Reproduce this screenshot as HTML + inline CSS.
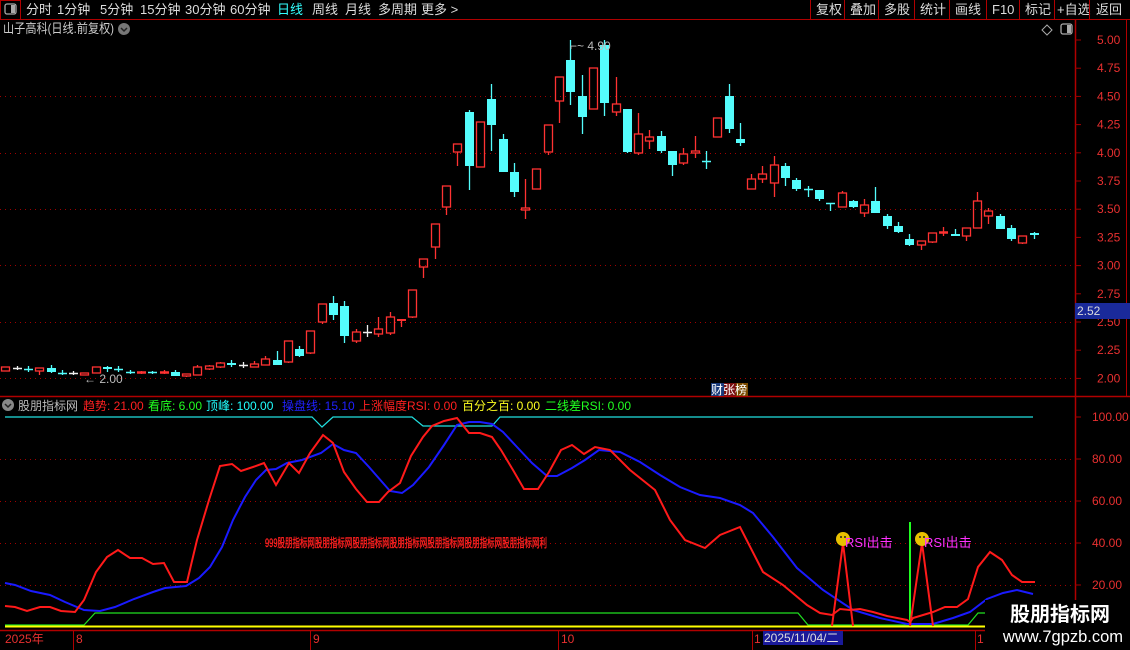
<!DOCTYPE html>
<html><head><meta charset="utf-8"><style>
body{margin:0;background:#000;width:1130px;height:650px;overflow:hidden;font-family:"Liberation Sans","Noto Sans CJK SC",sans-serif;}
svg{position:absolute;left:0;top:0}
text{font-family:"Liberation Sans","Noto Sans CJK SC",sans-serif}
</style></head><body>
<svg id="s" width="1130" height="650" viewBox="0 0 1130 650">
<rect width="1130" height="650" fill="#000"/>
<line x1="0" y1="19.5" x2="1130" y2="19.5" stroke="#b00000"/>
<rect x="0.5" y="0.5" width="20" height="19" fill="none" stroke="#b00000"/>
<rect x="5" y="4" width="11" height="10" rx="2" fill="none" stroke="#aaa" stroke-width="1.3"/>
<rect x="11" y="5" width="4" height="8" fill="#aaa"/>
<g font-size="13" fill="#ddd">
<text x="26" y="14">分时</text><text x="57" y="14">1分钟</text><text x="100" y="14">5分钟</text><text x="140" y="14">15分钟</text><text x="185" y="14">30分钟</text><text x="230" y="14">60分钟</text>
<text x="277" y="14" fill="#3ff">日线</text><text x="312" y="14">周线</text><text x="345" y="14">月线</text><text x="378" y="14">多周期</text><text x="421" y="14">更多 &gt;</text>
<text x="816" y="14">复权</text><text x="850" y="14">叠加</text><text x="884" y="14">多股</text><text x="920" y="14">统计</text><text x="955" y="14">画线</text><text x="992" y="14">F10</text><text x="1025" y="14">标记</text><text x="1057" y="14">+自选</text><text x="1096" y="14">返回</text>
</g>
<g stroke="#b00000"><line x1="810.5" y1="0" x2="810.5" y2="19"/><line x1="844.5" y1="0" x2="844.5" y2="19"/><line x1="878.5" y1="0" x2="878.5" y2="19"/><line x1="914.5" y1="0" x2="914.5" y2="19"/><line x1="949.5" y1="0" x2="949.5" y2="19"/><line x1="986.5" y1="0" x2="986.5" y2="19"/><line x1="1019.5" y1="0" x2="1019.5" y2="19"/><line x1="1054.5" y1="0" x2="1054.5" y2="19"/><line x1="1089.5" y1="0" x2="1089.5" y2="19"/></g>
<text x="3" y="33" font-size="13" fill="#ccc" textLength="111" lengthAdjust="spacingAndGlyphs">山子高科(日线.前复权)</text>
<circle cx="124" cy="29" r="6" fill="#777"/><path d="M121 28l3 3 3-3" stroke="#222" stroke-width="1.5" fill="none"/>
<path d="M1047 25l5 5-5 5-5-5z" fill="none" stroke="#aaa"/>
<rect x="1061" y="24" width="11" height="10" rx="2" fill="none" stroke="#aaa" stroke-width="1.3"/><rect x="1067" y="25" width="4" height="8" fill="#aaa"/>
<line x1="1075.5" y1="20" x2="1075.5" y2="650" stroke="#b00000" stroke-width="1.5"/>
<line x1="0" y1="396.5" x2="1130" y2="396.5" stroke="#b00000" stroke-width="1.5"/>
<line x1="1126.5" y1="20" x2="1126.5" y2="396" stroke="#b00000"/>
<g id="grid" stroke="#a00000" stroke-dasharray="1 4"></g>
<g id="pax" font-size="12" fill="#e83030"></g>
<rect x="1075" y="303" width="55" height="16" fill="#1a2a9a"/>
<text x="1077" y="315" font-size="12" fill="#ddd">2.52</text>
<g id="cd"></g>
<text x="84" y="383" font-size="12" fill="#bbb">← 2.00</text>
<text x="570" y="50" font-size="12" fill="#bbb">⌐~ 4.90</text>
<rect x="711" y="383" width="13" height="13" fill="#1a3a7a"/><rect x="724" y="383" width="12" height="13" fill="#7a1010"/><rect x="736" y="383" width="12" height="13" fill="#7a4a00"/>
<text x="711" y="394" font-size="12" fill="#fff">财张榜</text>
<circle cx="8" cy="405" r="6" fill="#888"/><path d="M5 404l3 3 3-3" stroke="#222" stroke-width="1.5" fill="none"/>
<g font-size="12"><text x="18" y="410" fill="#bbb">股朋指标网</text><text x="83" y="410" fill="#ff2020">趋势: 21.00</text><text x="148" y="410" fill="#20ff20">看底: 6.00</text><text x="206" y="410" fill="#20ffff">顶峰: 100.00</text><text x="282" y="410" fill="#2020ff">操盘线: 15.10</text><text x="359" y="410" fill="#ff2020">上涨幅度RSI: 0.00</text><text x="462" y="410" fill="#ffff20">百分之百: 0.00</text><text x="545" y="410" fill="#20ff20">二线差RSI: 0.00</text></g>
<g id="lax" font-size="12" fill="#e83030"></g>
<text x="265" y="547" font-size="12" fill="#ff2020" stroke="#ff2020" stroke-width="0.4" textLength="282" lengthAdjust="spacingAndGlyphs">999股朋指标网股朋指标网股朋指标网股朋指标网股朋指标网股朋指标网股朋指标网利</text>
<polyline fill="none" stroke="#20e0e0" stroke-width="1.2" points="5,417 312,417 322,427 333,417 412,417 423,426 492,426 500,417 1033,417"/>
<polyline fill="none" stroke="#20e020" stroke-width="1.2" points="5,625 84,625 95,613 798,613 808,625 968,625 978,613 985,613"/>
<line x1="5" y1="626.5" x2="985" y2="626.5" stroke="#ffff00" stroke-width="2"/>
<line x1="910" y1="522" x2="910" y2="626" stroke="#20ff20" stroke-width="2"/>
<polyline fill="none" stroke="#1a1aff" stroke-width="2" points="5,583 15,585 31,591 50,595 65,602 84,610 100,611 115,607 134,599 153,592 165,588 186,586 199,578 210,567 222,547 233,520 245,497 256,480 266,470 276,469 287,463 302,460 321,453 333,444 344,450 356,453 369,467 383,483 390,491 402,493 413,485 429,467 444,445 457,425 469,422 480,422 492,424 503,432 517,447 532,463 547,476 557,476 572,468 585,460 599,450 620,452 640,462 660,475 680,487 700,495 720,498 740,505 753,513 773,537 797,568 823,590 853,610 880,618 907,624 933,624 953,618 970,612 987,599 1003,593 1017,590 1033,594"/>
<polyline fill="none" stroke="#ff1a1a" stroke-width="2" points="5,606 15,607 27,611 40,607 50,607 61,611 75,612 84,600 96,572 107,557 118,550 130,558 142,558 153,564 164,563 174,582 187,582 197,540 209,500 220,466 232,464 241,471 253,467 264,463 276,485 289,463 299,473 310,453 323,435 333,443 344,472 356,489 367,502 379,502 388,492 400,483 411,456 423,437 432,426 444,421 457,418 469,433 480,433 492,437 501,450 513,470 524,489 538,489 549,472 561,450 572,445 584,454 595,447 610,450 630,470 655,490 670,520 685,540 705,548 720,535 740,527 763,572 783,585 807,605 820,613 832,615 840,609 850,610 860,609 873,612 887,616 907,620 910,622 913,618 933,612 945,607 957,607 968,599 978,567 990,552 1002,560 1012,575 1022,582 1035,582"/>
<polyline fill="none" stroke="#ff1a1a" stroke-width="2" points="832,626 843,543 853,626"/>
<polyline fill="none" stroke="#ff1a1a" stroke-width="2" points="910,626 922,543 933,626"/>
<circle cx="843" cy="539" r="7" fill="#e8c000"/><circle cx="922" cy="539" r="7" fill="#e8c000"/>
<g fill="#222"><circle cx="841" cy="537" r="1"/><circle cx="845" cy="537" r="1"/><circle cx="920" cy="537" r="1"/><circle cx="924" cy="537" r="1"/></g>
<text x="845" y="547" font-size="13" fill="#ff30ff">RSI出击</text><text x="924" y="547" font-size="13" fill="#ff30ff">RSI出击</text>
<line x1="0" y1="630.5" x2="1075" y2="630.5" stroke="#b00000" stroke-width="1.5"/>
<g stroke="#b00000"><line x1="73.5" y1="630" x2="73.5" y2="650"/><line x1="310.5" y1="630" x2="310.5" y2="650"/><line x1="558.5" y1="630" x2="558.5" y2="650"/><line x1="752.5" y1="630" x2="752.5" y2="650"/><line x1="975.5" y1="630" x2="975.5" y2="650"/></g>
<g font-size="12" fill="#e83030"><text x="5" y="643">2025年</text><text x="76" y="643">8</text><text x="313" y="643">9</text><text x="561" y="643">10</text><text x="754" y="643">1</text><text x="977" y="643">1</text></g>
<rect x="763" y="631" width="80" height="14" fill="#1a1a9a"/><text x="764" y="642" font-size="12" fill="#ddd">2025/11/04/二</text>
<rect x="985" y="600" width="145" height="50" fill="#000"/>
<text x="1060" y="621" font-size="20" font-weight="bold" fill="#fff" text-anchor="middle">股朋指标网</text>
<text x="1063" y="642" font-size="16.5" fill="#fff" text-anchor="middle">www.7gpzb.com</text>
</svg>
<script>
var NS="http://www.w3.org/2000/svg";
function el(p,t,a,txt){var e=document.createElementNS(NS,t);for(var k in a)e.setAttribute(k,a[k]);if(txt)e.textContent=txt;document.getElementById(p).appendChild(e);}
[96,153,209,265,322,378].forEach(function(y){el("grid","line",{x1:0,y1:y+.5,x2:1075,y2:y+.5});});
[459,501,543,585].forEach(function(y){el("grid","line",{x1:0,y1:y+.5,x2:1075,y2:y+.5});});
["5.00","4.75","4.50","4.25","4.00","3.75","3.50","3.25","3.00","2.75","2.50","2.25","2.00"].forEach(function(t,i){var y=40+i*28.2;el("pax","text",{x:1097,y:y+4},t);el("grid","line",{x1:1075,y1:y,x2:1081,y2:y,"stroke-dasharray":"none"});});
["100.00","80.00","60.00","40.00","20.00"].forEach(function(t,i){var y=417+i*42;el("lax","text",{x:1092,y:y+4},t);el("grid","line",{x1:1075,y1:y,x2:1081,y2:y,"stroke-dasharray":"none"});});
var D=[[367,371,0,0,'r'],[368,368,366,370,'w'],[369,369,366,372,'c'],[368,371,0,375,'r'],[368,372,365,373,'c'],[373,373,370,375,'c'],[373,373,371,375,'w'],[373,375,0,0,'r'],[367,373,0,0,'r'],[367,369,366,372,'c'],[369,369,366,372,'c'],[372,372,370,374,'c'],[372,373,371,374,'R'],[372,372,371,374,'c'],[372,373,370,374,'R'],[372,376,370,0,'c'],[374,376,0,377,'r'],[367,375,365,0,'r'],[366,369,365,370,'r'],[363,367,362,368,'r'],[363,365,360,367,'c'],[365,365,362,368,'w'],[364,367,361,0,'r'],[359,365,356,0,'r'],[360,365,351,0,'c'],[341,362,0,363,'r'],[349,356,346,357,'c'],[331,353,0,354,'r'],[304,322,0,324,'r'],[303,315,296,320,'c'],[306,336,301,343,'c'],[332,341,329,343,'r'],[332,332,325,337,'w'],[329,334,317,337,'r'],[317,333,312,335,'r'],[319,321,0,327,'R'],[290,317,0,318,'r'],[259,267,0,278,'r'],[224,247,0,259,'r'],[186,207,0,215,'r'],[144,152,0,166,'r'],[112,166,110,190,'c'],[122,167,0,0,'r'],[99,125,84,151,'c'],[139,172,134,0,'c'],[172,192,163,197,'c'],[208,210,179,219,'r'],[169,189,0,0,'r'],[125,152,0,155,'r'],[77,101,0,123,'r'],[60,92,40,105,'c'],[96,117,75,134,'c'],[68,109,0,0,'r'],[45,103,40,116,'c'],[104,112,77,116,'r'],[109,152,0,153,'c'],[134,153,113,155,'r'],[137,141,130,149,'r'],[136,151,131,153,'c'],[151,165,0,176,'c'],[154,163,148,165,'r'],[151,153,136,158,'r'],[161,161,151,169,'c'],[118,137,0,0,'r'],[96,129,84,133,'c'],[139,143,123,146,'c'],[179,189,174,0,'r'],[174,179,166,183,'r'],[165,183,156,197,'r'],[166,178,163,186,'c'],[180,189,178,191,'c'],[189,189,186,197,'c'],[190,199,0,201,'c'],[203,203,0,211,'c'],[193,207,191,0,'r'],[201,207,200,208,'c'],[205,213,199,217,'r'],[201,213,187,0,'c'],[216,226,214,229,'c'],[226,232,222,233,'c'],[239,245,234,246,'c'],[241,245,0,250,'r'],[233,242,0,243,'r'],[232,233,227,236,'R'],[234,236,229,0,'c'],[228,236,0,241,'r'],[201,228,192,0,'r'],[211,216,208,224,'r'],[216,229,214,0,'c'],[228,239,225,241,'c'],[236,243,0,244,'r'],[233,235,232,239,'c']];
D.forEach(function(d,i){var x=Math.round(5.3+i*11.3)+.5,t=d[0],b=d[1],h=d[2]||t,l=d[3]||b,k=d[4];
var col=k=='c'?'#54fcfc':(k=='w'?'#eee':'#ff3232');
if(h<t)el("cd","line",{x1:x,y1:h,x2:x,y2:t,stroke:col,"stroke-width":1.3});
if(l>b)el("cd","line",{x1:x,y1:b,x2:x,y2:l,stroke:col,"stroke-width":1.3});
if(b-t<1.5){el("cd","line",{x1:x-4.5,y1:t+.5,x2:x+4.5,y2:t+.5,stroke:col,"stroke-width":k=='R'?2.5:1.5});}
else if(k=='c'||k=='R')el("cd","rect",{x:x-4.5,y:t,width:9,height:b-t,fill:col});
else el("cd","rect",{x:x-4,y:t,width:8,height:b-t,fill:"none",stroke:col,"stroke-width":1.3});});
</script>
</body></html>
